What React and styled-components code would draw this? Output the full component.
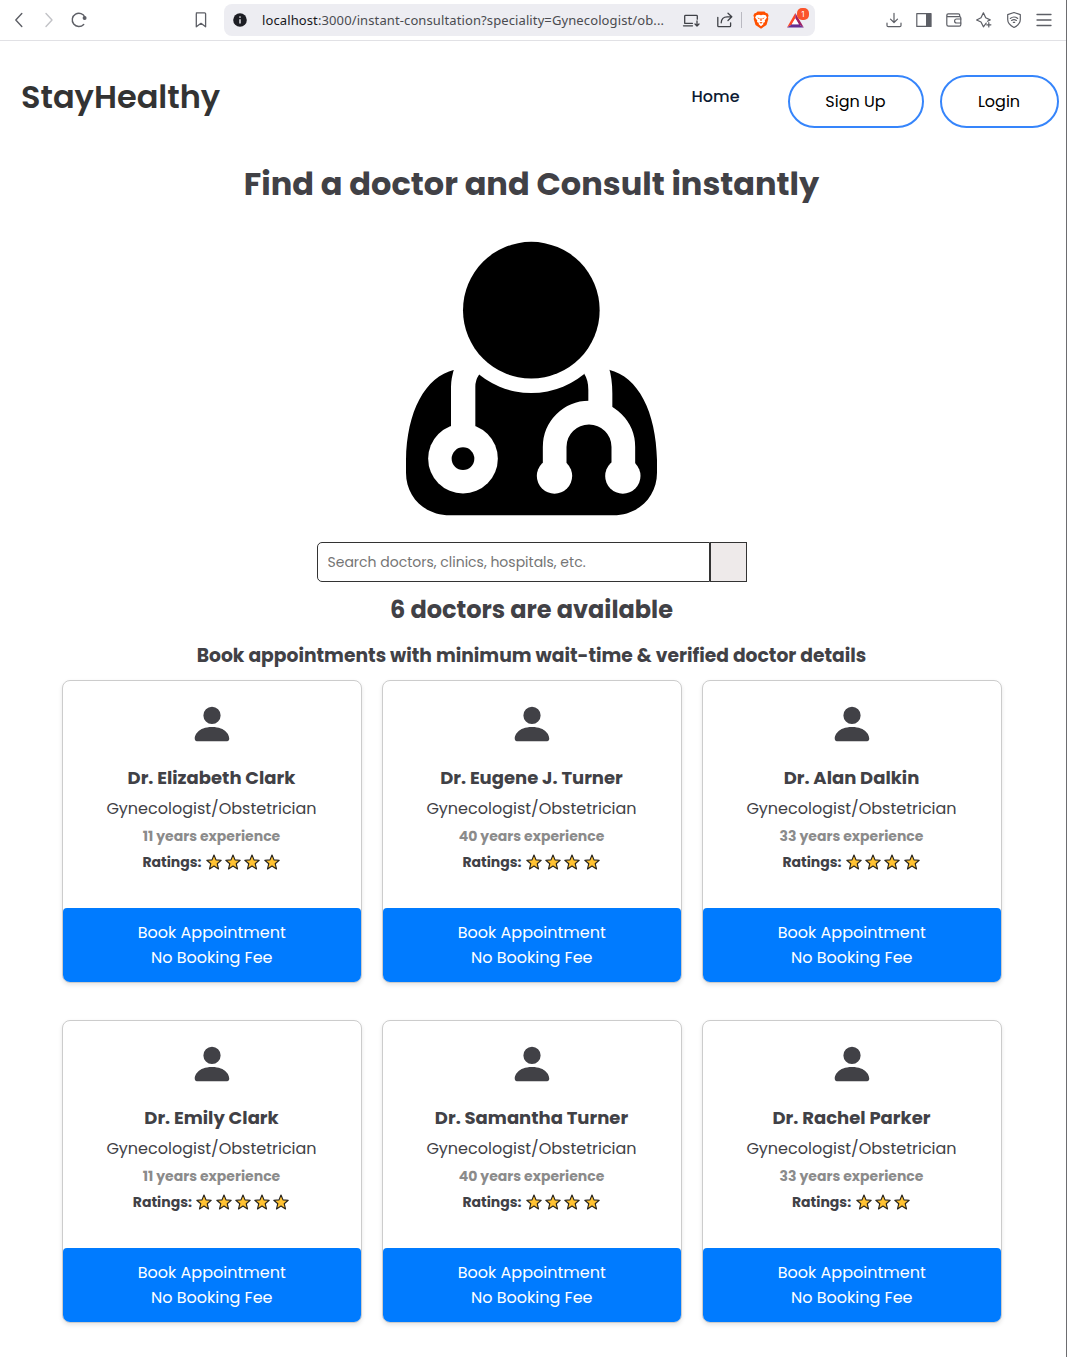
import React from 'react';
import styled, { createGlobalStyle } from 'styled-components';
import { BsPersonFill } from 'react-icons/bs';

const GlobalStyle = createGlobalStyle`
  *, *::before, *::after { box-sizing: border-box; }
  body {
    margin: 0;
    background: #fff;
    font-family: Poppins, Inter, "Open Sans", sans-serif;
    color: #414146;
  }
`;

const Window = styled.div`
  width: 100%;
  min-height: 1357px;
  border-right: 1px solid #6d6d70;
`;

/* Browser toolbar */

const Toolbar = styled.div`
  display: flex;
  align-items: center;
  height: 41px;
  padding-left: 4px;
  padding-right: 7px;
  border-bottom: 1px solid #e1e1e5;
  color: #5d5f66;
`;

const ToolSlot = styled.span`
  display: flex;
  align-items: center;
  justify-content: center;
  flex: none;
  width: ${(p) => p.$width || 30}px;
  height: 32px;
  color: ${(p) => p.$color || 'inherit'};
`;

const Spacer = styled.span`
  flex: ${(p) => (p.$width ? `0 0 ${p.$width}px` : 1)};
`;

const AddressBar = styled.div`
  display: flex;
  align-items: center;
  flex: none;
  width: 591px;
  height: 32px;
  margin-left: 8px;
  padding-left: 8px;
  border-radius: 8px;
  background: #ededf2;
  color: #3f4147;
`;

const Url = styled.span`
  width: 421px;
  padding-left: 14px;
  font: 13px/20px "Noto Sans", sans-serif;
  letter-spacing: 0.11px;
  white-space: nowrap;
  color: #4a4b50;
`;

const Host = styled.span`
  color: #17171b;
`;

const Divider = styled.span`
  width: 1px;
  height: 16px;
  margin: 0 11px 0 4px;
  background: #b9b9c1;
`;

const RewardsButton = styled.span`
  position: relative;
  display: flex;
  align-items: center;
  width: 20px;
  height: 32px;
  margin-left: 17px;
`;

const Badge = styled.span`
  position: absolute;
  top: 4px;
  right: -3px;
  width: 12px;
  height: 12px;
  border-radius: 5px;
  background: #fb542b;
  color: #fff;
  font: 8px/12px Inter, sans-serif;
  text-align: center;
`;

/* Site header */

const Header = styled.header`
  display: flex;
  justify-content: space-between;
  align-items: flex-start;
  width: 1058.5px;
  height: 102px;
  padding: 34px 0 0 21px;
`;

const Brand = styled.a`
  font-size: 32px;
  font-weight: 600;
  line-height: 44px;
  color: #333;
`;

const Nav = styled.nav`
  display: flex;
  align-items: flex-start;
`;

const NavLink = styled.a`
  margin: 10px 48px 0 0;
  font-size: 16px;
  font-weight: 500;
  line-height: 24px;
  color: #0c1a33;
`;

const NavButton = styled.button`
  width: ${(p) => p.$width}px;
  height: 53px;
  margin-left: ${(p) => p.$gap || 0}px;
  padding: 0;
  border: 2px solid #3685fb;
  border-radius: 27px;
  background: #fff;
  color: #000;
  font: 400 16px/24px Poppins, Inter, sans-serif;
`;

/* Search section */

const Main = styled.main`
  display: flex;
  flex-direction: column;
  align-items: center;
  width: 1063px;
`;

const Title = styled.h1`
  margin: 17px 0 33px;
  font-size: 32px;
  font-weight: 700;
  line-height: 48px;
`;

const Illustration = styled.svg`
  display: block;
  width: 252px;
  height: 275px;
  margin-left: 1px;
`;

const SearchRow = styled.form`
  display: flex;
  width: 430px;
  height: 40px;
  margin: 26px 0 0 1px;
`;

const SearchInput = styled.input`
  flex: 1;
  min-width: 0;
  padding: 0 9.5px;
  border: 1px solid #333;
  border-radius: 5px 0 0 5px;
  background: #fff;
  font: 400 14px/20px Poppins, Inter, sans-serif;
  outline: none;
  &::placeholder { color: #757575; }
`;

const SearchButton = styled.button`
  width: 37px;
  padding: 0;
  border: 1px solid #333;
  background: #eeeaea;
`;

const Count = styled.h2`
  margin: 10px 0 14px;
  font-size: 24px;
  font-weight: 700;
  line-height: 36px;
`;

const Tagline = styled.h3`
  margin: 0 0 10px;
  font-size: 18.72px;
  font-weight: 700;
  line-height: 28px;
`;

/* Doctor cards */

const CardGrid = styled.section`
  display: grid;
  grid-template-columns: repeat(3, 300px);
  gap: 37px 20px;
  margin-left: 1px;
`;

const Card = styled.article`
  display: flex;
  flex-direction: column;
  align-items: center;
  height: 303px;
  padding-top: 20px;
  border: 1px solid #ccc;
  border-radius: 8px;
  background: #fff;
  box-shadow: 0 2px 4px rgba(0, 0, 0, 0.1);
`;

const Name = styled.div`
  margin: 17px 1px 0 0;
  font-size: 18px;
  font-weight: 700;
  line-height: 28px;
`;

const Speciality = styled.div`
  margin: 5px 1px 0 0;
  font-size: 16px;
  line-height: 24px;
`;

const Experience = styled.div`
  margin: 5px 1px 0 0;
  font-size: 14px;
  font-weight: 700;
  line-height: 20px;
  color: #8b8b8b;
`;

const Ratings = styled.div`
  display: flex;
  align-items: center;
  gap: 3.2px;
  height: 20px;
  margin: 6px 2px 0 0;
  font-size: 14px;
  font-weight: 700;
`;

const RatingLabel = styled.span`
  margin-right: 1.3px;
`;

const BookButton = styled.button`
  width: 100%;
  height: 74px;
  margin-top: auto;
  padding: 12px 0.5px 12px 0;
  border: 0;
  border-radius: 4px 4px 7px 7px;
  background: #007bff;
  color: #fff;
  font: 400 16px/25px Poppins, Inter, sans-serif;
`;

const BookLine = styled.span`
  display: block;
`;

function Glyph({ size = 18, width = 1.2, children }) {
  return (
    <svg width={size} height={size} viewBox="0 0 18 18" fill="none" stroke="currentColor"
      strokeWidth={width} strokeLinecap="round" strokeLinejoin="round">
      {children}
    </svg>
  );
}

function BraveLogo() {
  return (
    <svg width="16" height="18" viewBox="0 0 16 18">
      <path d="M4.5 .5h7L13 2l1.4.2 1.2 2-.6 2.2.3 1.6-1.8 6L8 17.8 2.5 14 .7 8 1 6.4.4 4.2l1.2-2L3 2z" fill="#ff5000" />
      <path d="M3.3 4.2 6 3.7 8 4.3l2-.6 2.7.5 1.2 2.3-2.2 3 .3 1.6-2 1 .5 1L8 15.3l-2.5-2.2.5-1-2-1 .3-1.6-2.2-3z" fill="#fff" />
      <path d="m4.2 6.5 2.4.7-.3 1.2zM11.8 6.5l-2.4.7.3 1.2zM7.5 7.2h1l.3 2.4-.8.5-.8-.5zM6.3 11.6l1.7-.6 1.7.6-1.7 1.1z" fill="#ff5000" />
    </svg>
  );
}

function BatLogo() {
  return (
    <svg width="19" height="17" viewBox="0 0 19 17">
      <path d="M9.3 1 1 15.5l5-3.3 3.3-5.7z" fill="#ff4724" />
      <path d="m9.3 1 8.5 14.5-5.1-3.3-3.4-5.7z" fill="#9e1f63" />
      <path d="M1 15.5h16.8l-5.1-3.3H6z" fill="#662d91" />
      <path d="M9.3 6.3 5.8 12.3h7z" fill="#fff" />
    </svg>
  );
}

function BrowserToolbar() {
  return (
    <Toolbar>
      <ToolSlot><Glyph width={1.4}><path d="M11.8 2.5 5.8 9l6 6.5" /></Glyph></ToolSlot>
      <ToolSlot $color="#c2c3c7"><Glyph width={1.4}><path d="m6 2.5 6 6.5-6 6.5" /></Glyph></ToolSlot>
      <ToolSlot>
        <Glyph width={1.4}>
          <path d="M13.7 13.4A6.6 6.6 0 1 1 15 6.5" />
          <circle cx="14.6" cy="7.1" r="1.3" fill="currentColor" />
        </Glyph>
      </ToolSlot>
      <Spacer $width={92} />
      <ToolSlot>
        <Glyph width={1.3}><path d="M4.4 1.8h8.2q1 0 1 1v13L9 12.3l-4.7 3.5v-13q0-1 1-1" /></Glyph>
      </ToolSlot>
      <AddressBar>
        <ToolSlot $width={16} $color="#1d1e24">
          <svg width="14" height="14" viewBox="0 0 14 14">
            <circle cx="7" cy="7" r="6.8" fill="currentColor" />
            <path d="M7 6.2v4.3" stroke="#ededf2" strokeWidth="1.4" />
            <circle cx="7" cy="4" r=".85" fill="#ededf2" />
          </svg>
        </ToolSlot>
        <Url><Host>localhost</Host>:3000/instant-consultation?speciality=Gynecologist/ob...</Url>
        <ToolSlot $width={44}>
          <Glyph width={1.3}>
            <path d="M10.5 14.8H1.5M2.7 12.3V5.2q0-.8.8-.8h11q.8 0 .8.8v3M2.7 12.3h7.8" />
            <path d="M15 10v5m-2-2 2 2 2-2" />
          </Glyph>
        </ToolSlot>
        <ToolSlot $width={24}>
          <Glyph width={1.3}>
            <path d="M1.8 6.3v8.5q0 .9.9.9h11q.9 0 .9-.9v-3" />
            <path d="M5.2 11.8c.2-4 2.5-6 6-6h4M12 2.2l3.8 3.6-3.8 3.7" />
          </Glyph>
        </ToolSlot>
        <Divider />
        <BraveLogo />
        <RewardsButton><BatLogo /><Badge>1</Badge></RewardsButton>
      </AddressBar>
      <Spacer />
      <ToolSlot>
        <Glyph><path d="M9 2.3v9m-3.5-3.2L9 11.5l3.5-3.4M2 12v2.5q0 1.2 1.2 1.2h11.6q1.2 0 1.2-1.2V12" /></Glyph>
      </ToolSlot>
      <ToolSlot>
        <Glyph><rect x="1.8" y="2.6" width="14" height="12.8" /><path d="M11.6 2.6h4.2v12.8h-4.2z" fill="currentColor" /></Glyph>
      </ToolSlot>
      <ToolSlot>
        <Glyph>
          <path d="M1.8 4.2v9.4q0 1.6 1.6 1.6h11q1.4 0 1.4-1.4V7q0-1.3-1.4-1.3H3q-1.2 0-1.2-1.4T3.2 2.8h10.2q1.3 0 1.3 1.3v1.5" />
          <path d="M15.8 8h-4.2q-2 0-2 2t2 2h4.2" />
        </Glyph>
      </ToolSlot>
      <ToolSlot>
        <Glyph>
          <path d="M11.2 12.1 8.4 15.8 6 11l-4.4-2L6 6.8l2.4-5 2.3 5 4.5 2.1-2.7 1.3" />
          <path d="M13.8 11.7v4.2m-2.1-2.1h4.2" />
        </Glyph>
      </ToolSlot>
      <ToolSlot>
        <Glyph>
          <path d="m9 1.5 6.3 2.1v5c0 3.8-3 6.3-6.3 7.9-3.3-1.6-6.3-4.1-6.3-7.9v-5z" />
          <path d="M5.3 7.4q3.7-2.8 7.4 0M6.6 9.4q2.4-1.7 4.8 0M8.3 11.3h1.4" />
        </Glyph>
      </ToolSlot>
      <ToolSlot><Glyph width={1.3}><path d="M2 3.5h14M2 9h14M2 14.5h14" /></Glyph></ToolSlot>
    </Toolbar>
  );
}

function DoctorIllustration() {
  return (
    <Illustration viewBox="48 33 756 825">
      <path d="M180 856C103 856 48 800 48 728V690C50 545 105 440 193 419L200 415H650L657 419C745 440 798 545 801 690V728C801 800 745 856 670 856Z" />
      <circle cx="424" cy="240" r="249" fill="#fff" />
      <circle cx="424" cy="240.5" r="205" />
      <g fill="#fff">
        <path d="M194 410Q183 445 183 470V600H256V470Q256 450 267 434V410Z" />
        <circle cx="219" cy="686" r="104.5" />
        <path d="M583 410V432Q595 450 595 480V530L667 540V490Q667 445 656 410Z" />
        <circle cx="493.5" cy="738" r="53" />
        <circle cx="698.5" cy="738" r="53" />
      </g>
      <path d="M494 738V651A103 103 0 0 1 700 651V738" fill="none" stroke="#fff" strokeWidth="71" />
      <circle cx="219" cy="686" r="34" />
    </Illustration>
  );
}

function Star() {
  return (
    <svg width="16" height="16" viewBox="0 0 16 16">
      <path d="m8 1 2 4.9 5.2.4-4 3.4 1.3 5.2L8 12.1l-4.5 2.8 1.3-5.2-4-3.4L6 5.9z"
        fill="#ffc233" stroke="#26221c" strokeWidth="1.15" strokeLinejoin="round" />
    </svg>
  );
}

const doctors = [
  { name: 'Dr. Elizabeth Clark', years: 11, stars: 4 },
  { name: 'Dr. Eugene J. Turner', years: 40, stars: 4 },
  { name: 'Dr. Alan Dalkin', years: 33, stars: 4 },
  { name: 'Dr. Emily Clark', years: 11, stars: 5 },
  { name: 'Dr. Samantha Turner', years: 40, stars: 4 },
  { name: 'Dr. Rachel Parker', years: 33, stars: 3 },
];

function DoctorCard({ doctor }) {
  return (
    <Card>
      <BsPersonFill size={46} color="#414146" />
      <Name>{doctor.name}</Name>
      <Speciality>Gynecologist/Obstetrician</Speciality>
      <Experience>{doctor.years} years experience</Experience>
      <Ratings>
        <RatingLabel>Ratings:</RatingLabel>
        {Array.from({ length: doctor.stars }, (_, i) => <Star key={i} />)}
      </Ratings>
      <BookButton>
        <BookLine>Book Appointment</BookLine>
        <BookLine>No Booking Fee</BookLine>
      </BookButton>
    </Card>
  );
}

export default function App() {
  return (
    <Window>
      <GlobalStyle />
      <BrowserToolbar />
      <Header>
        <Brand>StayHealthy</Brand>
        <Nav>
          <NavLink>Home</NavLink>
          <NavButton $width={136}>Sign Up</NavButton>
          <NavButton $width={119} $gap={16}>Login</NavButton>
        </Nav>
      </Header>
      <Main>
        <Title>Find a doctor and Consult instantly</Title>
        <DoctorIllustration />
        <SearchRow>
          <SearchInput placeholder="Search doctors, clinics, hospitals, etc." />
          <SearchButton type="button" />
        </SearchRow>
        <Count>6 doctors are available</Count>
        <Tagline>Book appointments with minimum wait-time &amp; verified doctor details</Tagline>
        <CardGrid>
          {doctors.map((doctor) => <DoctorCard key={doctor.name} doctor={doctor} />)}
        </CardGrid>
      </Main>
    </Window>
  );
}
